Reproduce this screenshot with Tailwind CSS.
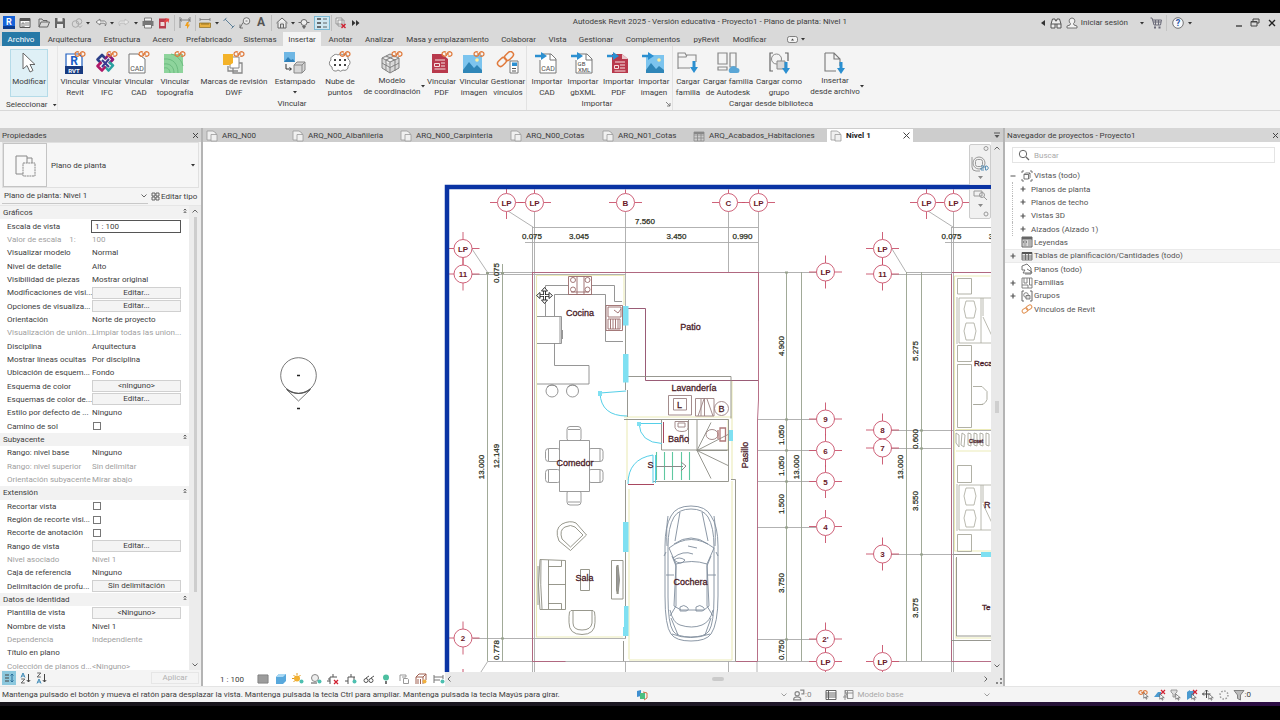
<!DOCTYPE html>
<html lang="es">
<head>
<meta charset="utf-8">
<title>Autodesk Revit 2025 - Proyecto1</title>
<script src="https://cdn.jsdelivr.net/npm/@tailwindcss/browser@4"></script>
</head>
<body class="bg-black">
<!-- Shared symbols -->
<svg class="absolute size-0" aria-hidden="true">
  <defs>
    <symbol id="link" viewBox="0 0 12 6"><g fill="none" stroke="#e07a3c" stroke-width="1.3"><path d="M5 1.2C4 .6 1 .3 1 3s3 2.400 4 1.800C6 4.200 6 1.800 7 1.200 8 .6 11 .3 11 3S8 5.400 7 4.800"/><path d="M4 3h4"/></g></symbol>
    <symbol id="down" viewBox="0 0 6 4"><path d="M1 1h4L3 3.500z" fill="#333"/></symbol>
    <symbol id="chev" viewBox="0 0 8 6"><path d="M1.500 1.500 4 4l2.500-2.500" fill="none" stroke="#666" stroke-width="1"/></symbol>
    <symbol id="plan" viewBox="0 0 12 12"><g fill="#f0f0f0" stroke="#9a9a9a" stroke-width=".8"><path d="M1 1h6l3 2v7H1z"/><path d="M5 4.500h6v6.500H5z"/></g></symbol>
    <symbol id="sheet" viewBox="0 0 12 12"><path d="M1 2h10v9H1zM1 5h10M1 8h10M4.500 2v9M8 2v9" fill="none" stroke="#888" stroke-width=".8"/><path d="M1 2h10v2H1z" fill="#888"/></symbol>
    <symbol id="cur" viewBox="0 0 8 10"><path d="M1 1v7l2-1.700L4.400 9.300l1-.5L4.200 6H7z" fill="#fff" stroke="#444" stroke-width=".8"/></symbol>
    <symbol id="impArrow" viewBox="0 0 12 8"><path d="M0 2.800h6V0l6 4-6 4V5.200H0z" fill="#2b8fd0"/></symbol>
    <symbol id="dnArrow" viewBox="0 0 8 12"><path d="M2.500 0h3v6H8l-4 6-4-6h2.500z" fill="#2b8fd0"/></symbol>
    <symbol id="plus" viewBox="0 0 8 8"><path d="M4 1.500v5M1.500 4h5" stroke="#555" stroke-width="1.200"/></symbol>
    <symbol id="fold" viewBox="0 0 4 6"><path d="M.8 2.500 2 1l1.200 1.500M.8 5 2 3.500 3.200 5" fill="none" stroke="#444" stroke-width=".9"/></symbol>
  </defs>
</svg>

<div class="flex h-screen min-h-[640px] w-full flex-col overflow-hidden bg-black font-['Roboto','Open_Sans',sans-serif] text-[8px] leading-[11px] text-[#3c3c3c]">
  <div class="h-[13px] shrink-0 bg-black"></div>

  <!-- Title bar -->
  <header class="flex h-[19px] shrink-0 items-center bg-[#d9d9d9] pl-px">
    <button aria-label="Revit" class="flex h-4 w-4 items-center justify-center"><svg class="h-[15px] w-[14px]" viewBox="0 0 14 15"><path d="M1 1h12v12H1z" fill="#1762d8"/><path d="M1 11h12v3H1z" fill="#0b3a8c"/><text x="7" y="9.500" text-anchor="middle" font-size="9" font-weight="700" fill="#fff">R</text></svg></button>
    <button aria-label="Inicio" class="flex h-4 w-4 items-center justify-center"><svg class="size-3" viewBox="0 0 12 12"><path d="M1 1.500h10v9H1z" fill="#fafafa" stroke="#555"/><path d="M1 1.500h10V4H1z" fill="#555"/><path d="M3 6h2v4H3zM6 6h4M6 8h4" stroke="#666" stroke-width=".8" fill="none"/></svg></button>
    <button aria-label="Abrir" class="ml-[3px] flex h-4 w-4 items-center justify-center"><svg class="size-3" viewBox="0 0 12 12"><path d="M1 10V2h3l1 1.500h4V5M1 10l2-5h8.500l-2 5z" fill="none" stroke="#666"/></svg></button>
    <button aria-label="Guardar" class="flex h-4 w-4 items-center justify-center"><svg class="size-3" viewBox="0 0 12 12"><path d="M1 1h9l1 1v9H1z" fill="#666"/><path d="M3.500 1h5v3.500h-5zM3 7h6v4H3z" fill="#e8e8e8"/></svg></button>
    <button aria-label="Sincronizar" class="flex h-4 w-[17px] items-center justify-center"><svg class="size-3" viewBox="0 0 12 12"><g fill="none" stroke="#aaa"><circle cx="4.500" cy="7" r="3.300"/><circle cx="8" cy="4.500" r="2.800"/><path d="M7 8.500l2 2 2-2"/></g></svg></button>
    <svg class="h-1 w-[6px]"><use href="#down"/></svg>
    <button aria-label="Deshacer" class="ml-px flex h-4 w-[17px] items-center justify-center"><svg class="size-3" viewBox="0 0 12 12"><path d="M5 2 1 5l4 3V6.200h4c1.200 0 1.500 1 1.200 2.800 1.300-1.600 1.300-5-1.200-5H5z" fill="#f4f4f4" stroke="#777" stroke-width=".9"/></svg></button>
    <svg class="h-1 w-[6px]"><use href="#down"/></svg>
    <button aria-label="Rehacer" class="ml-px flex h-4 w-4 items-center justify-center"><svg class="size-3" viewBox="0 0 12 12"><path d="M7 2l4 3-4 3V6.200H3C1.800 6.200 1.500 7.200 1.800 9 .5 7.400.5 4 3 4h4z" fill="#e8e8e8" stroke="#bbb" stroke-width=".9"/></svg></button>
    <svg class="ml-px h-1 w-[6px]"><use href="#down"/></svg>
    <button aria-label="Imprimir" class="ml-px flex h-4 w-4 items-center justify-center"><svg class="size-3" viewBox="0 0 12 12"><path d="M.5 4h11v5h-11z" fill="#777"/><path d="M2.500 1h7v3h-7zM2.500 7.500h7V11h-7z" fill="#f2f2f2" stroke="#666" stroke-width=".8"/></svg></button>
    <button aria-label="Exportar PDF" class="flex h-4 w-4 items-center justify-center"><svg class="size-3" viewBox="0 0 12 12"><path d="M1 1.500h7v10H1z" fill="#b83a4a"/><path d="M2.500 5h4v4h-4z" fill="#f0dada"/><path d="M6 3h3V1l3 3-3 3V5H6z" fill="#e64646" transform="rotate(-35 8 4)"/></svg></button>
    <span class="mx-[2px] h-4 w-px bg-[#bdbdbd]"></span>
    <button aria-label="Cota" class="flex h-4 w-4 items-center justify-center"><svg class="size-[14px]" viewBox="0 0 14 14"><path d="M2 1v11M12 1v5M2 4h10M4 2.500 2.200 4 4 5.500M10 2.500 11.800 4 10 5.500" fill="none" stroke="#777" stroke-width=".9"/><path d="M9 6l-2 4h2v3l3-4.500h-2L11 6z" fill="#f0a020"/></svg></button>
    <span class="ml-[2px] mr-px h-4 w-px bg-[#bdbdbd]"></span>
    <button aria-label="Medir" class="flex h-4 w-4 items-center justify-center"><svg class="size-3" viewBox="0 0 12 12"><path d="M1 2.500h10M1 1v3M11 1v3" stroke="#777" stroke-width=".8"/><path d="M.5 6h11v4.500H.5z" fill="#e8b040" stroke="#8a6a20" stroke-width=".7"/><path d="M3 6v2M5 6v2M7 6v2M9 6v2" stroke="#6a5010" stroke-width=".6"/></svg></button>
    <svg class="ml-px h-1 w-[6px]"><use href="#down"/></svg>
    <button aria-label="Cota alineada" class="ml-px flex h-4 w-4 items-center justify-center"><svg class="size-3" viewBox="0 0 12 12"><path d="M2 2l8 8M.5 4 3.500.8M8.500 11.500l3-3" stroke="#5c7f98" fill="none"/></svg></button>
    <button aria-label="Etiqueta" class="flex h-4 w-4 items-center justify-center"><svg class="size-3" viewBox="0 0 12 12"><circle cx="7.500" cy="4" r="3.300" fill="#eee" stroke="#666" stroke-width=".9"/><path d="M6.500 4h2M4 5.500 1 11M1 7.500v3.500h3" stroke="#666" fill="none" stroke-width=".9"/></svg></button>
    <button aria-label="Texto" class="flex h-4 w-4 items-center justify-center text-[12px] font-bold text-[#555]">A</button>
    <span class="ml-[2px] mr-[2px] h-4 w-px bg-[#bdbdbd]"></span>
    <button aria-label="Vista 3D" class="flex h-4 w-4 items-center justify-center"><svg class="size-3" viewBox="0 0 12 12"><path d="M.5 6 6 1l5.500 5M2 5.500V11h8V5.500M4.500 11V7h3v4" fill="#eee" stroke="#666"/></svg></button>
    <svg class="h-1 w-[6px]"><use href="#down"/></svg>
    <button aria-label="Sección" class="flex h-4 w-4 items-center justify-center"><svg class="size-3" viewBox="0 0 12 12"><circle cx="6" cy="5.500" r="3" fill="#eee" stroke="#666"/><path d="M.5 5.500h2.500M9 5.500h2.500M4.500 9.500l1.500 2 1.500-2z" stroke="#666" fill="#666"/></svg></button>
    <button aria-label="Líneas finas" class="ml-[2px] flex h-[14px] w-4 items-center justify-center border border-[#7cb9d4] bg-[#cfe6f0]"><svg class="size-3" viewBox="0 0 12 12"><path d="M1 2h4M1 6h4M1 10h4" stroke="#444" stroke-width="1.500"/><path d="M7 2h4M7 6h4M7 10h4" stroke="#444" stroke-width=".8"/></svg></button>
    <span class="mx-px h-4 w-px bg-[#bdbdbd]"></span>
    <button aria-label="Cerrar inactivas" class="flex h-4 w-4 items-center justify-center"><svg class="size-3" viewBox="0 0 12 12"><path d="M1 1h6v6H1zM3 3h6v6H3z" fill="#eee" stroke="#888" stroke-width=".8"/><path d="M6.500 7l4 4M10.500 7l-4 4" stroke="#d02030" stroke-width="1.400"/></svg></button>
    <button aria-label="Más" class="flex h-4 w-[14px] items-center justify-center"><svg class="h-[6px] w-2" viewBox="0 0 8 6"><path d="M0 0l3.500 3L0 6zM4 0l3.500 3L4 6z" fill="#333"/></svg></button>
    <h1 class="flex-1 pb-[3px] pl-4 text-center whitespace-nowrap">Autodesk Revit 2025 - Versión educativa - Proyecto1 - Plano de planta: Nivel 1</h1>
    <div class="flex items-center">
      <svg class="mr-[5px] h-[6px] w-1" viewBox="0 0 4 6"><path d="M4 0v6L0 3z" fill="#333"/></svg>
      <button aria-label="Buscar ayuda" class="w-4"><svg class="size-3" viewBox="0 0 12 12"><path d="M2.500 2h2.500l.5 2h1L7 2h2.500L11 7v4H7V7H5v4H1V7zM1 7h4M7 7h4" fill="#eee" stroke="#555"/></svg></button>
      <button class="flex items-center gap-[3px]"><svg class="size-3" viewBox="0 0 12 12"><path d="M6 1a3 3 0 0 1 1.500 5.500L8 8l3 1v2H1V9l3-1 .5-1.500A3 3 0 0 1 6 1z" fill="#f2f2f2" stroke="#666" stroke-width=".9"/></svg>Iniciar sesión</button>
      <svg class="ml-[11px] h-1 w-[6px]"><use href="#down"/></svg>
      <button aria-label="Tienda" class="ml-[5px] w-4"><svg class="size-3" viewBox="0 0 12 12"><path d="M.5 1H2l2 7h6.500L11.500 3H2.600M3 5h8M5.500 3v5M8.500 3v5" fill="none" stroke="#6a6a78"/><path d="M4 9.500h2v2H4zM8.500 9.500h2v2h-2z" fill="#6a6a78"/></svg></button>
      <span class="h-4 w-px bg-[#c4c4c4]"></span>
      <button aria-label="Ayuda" class="ml-[5px] size-3"><svg class="size-3" viewBox="0 0 12 12"><circle cx="6" cy="6" r="5.300" fill="#f6f8fc" stroke="#555" stroke-width=".8"/><text x="6" y="9.200" text-anchor="middle" font-size="9" font-weight="700" fill="#2856a8">?</text></svg></button>
      <svg class="ml-[3px] h-1 w-[6px]"><use href="#down"/></svg>
      <button aria-label="Minimizar" class="ml-[40px] w-4"><svg class="size-3" viewBox="0 0 12 12"><path d="M3 9h6" stroke="#333" stroke-width="1.300"/></svg></button>
      <button aria-label="Restaurar" class="w-[17px]"><svg class="size-3" viewBox="0 0 12 12"><path d="M4 4V2h6v4H8M2 4.500h6V9H2zM2 5h6" fill="none" stroke="#444"/></svg></button>
      <button aria-label="Cerrar" class="w-[14px]"><svg class="size-3" viewBox="0 0 12 12"><path d="M3 3l6 6M9 3 3 9" stroke="#222" stroke-width="1.300"/></svg></button>
    </div>
  </header>

  <!-- Ribbon tabs -->
  <nav class="flex h-[14px] shrink-0 items-stretch bg-[#d9d9d9] pl-[2px] whitespace-nowrap">
    <button class="w-[38px] bg-[#2779a7] text-white">Archivo</button>
    <button class="ml-px w-[57px]">Arquitectura</button>
    <button class="w-[48px]">Estructura</button>
    <button class="w-[34px]">Acero</button>
    <button class="w-[58px]">Prefabricado</button>
    <button class="w-[44px]">Sistemas</button>
    <button class="mx-px w-[38px] bg-[#f4f4f4]">Insertar</button>
    <button class="w-[37px]">Anotar</button>
    <button class="w-[41px]">Analizar</button>
    <button class="w-[95px]">Masa y emplazamiento</button>
    <button class="w-[47px]">Colaborar</button>
    <button class="w-[31px]">Vista</button>
    <button class="w-[46px]">Gestionar</button>
    <button class="w-[68px]">Complementos</button>
    <button class="w-[39px]">pyRevit</button>
    <button class="w-[47px]">Modificar</button>
    <button aria-label="Minimizar cinta" class="ml-[14px] flex items-center gap-[2px]"><svg class="h-[7px] w-[11px]" viewBox="0 0 11 7"><rect x=".5" y=".5" width="10" height="6" rx="2" fill="#f2f2f2" stroke="#666" stroke-width=".8"/><path d="M4 4.500 5.500 2.500 7 4.500z" fill="#444"/></svg><svg class="h-1 w-[6px]"><use href="#down"/></svg></button>
  </nav>

  <!-- Ribbon -->
  <section class="flex h-[65px] shrink-0 border-b border-[#d8d8d8] bg-[#f4f4f4] whitespace-nowrap">
    <div class="flex w-[58px] flex-col border-r border-[#e6e6e6] pt-[3px]">
      <button class="ml-[10px] flex h-[48px] w-[38px] flex-col items-center border border-[#b5dbe8] bg-[#dff0f6] pt-px">
        <svg class="size-6 shrink-0" viewBox="0 0 24 24"><path d="M6 2v16l4-3.500 3 6.500 3-1.500-3-6h5z" fill="#fff" stroke="#666"/></svg><span class="mt-px">Modificar</span></button>
      <button class="mt-[2px] flex items-center gap-[4px] pl-[6px]">Seleccionar<svg class="h-1 w-[6px]"><use href="#down"/></svg></button>
    </div>
    <div class="flex w-[469px] flex-col border-r border-[#e2e2e2] pt-[5px]">
      <div class="flex h-[47px] items-start pl-px">
        <button class="flex w-8 flex-col items-center"><svg class="size-6" viewBox="0 0 24 24"><path d="M3 3h13l3 3v12H3z" fill="#fff" stroke="#1f5fc0" stroke-width="1.200"/><path d="M2 15h18v8H2z" fill="#173a80"/><text x="11" y="14" text-anchor="middle" font-size="12" font-weight="700" fill="#1c5fc8">R</text><text x="11" y="21.500" text-anchor="middle" font-size="6" font-weight="700" fill="#fff">RVT</text><use href="#link" x="11" y="0" width="12" height="6"/></svg><span class="mt-px">Vincular<br>Revit</span></button>
        <button class="flex w-8 flex-col items-center"><svg class="size-6" viewBox="0 0 24 24"><g fill="none" stroke-width="2.600" stroke-linejoin="round"><path d="M6 12 2.500 8.500 7 4l4 4" stroke="#2c3f88"/><path d="M10 8l3.500-4L18 8.500l-4 4" stroke="#8c1a78"/><path d="M14 11l4 3.500-4.500 5-3.500-4" stroke="#2aa0a0"/><path d="M10.500 15.500 7 19.500 2.500 15l4-4" stroke="#b01868"/><path d="M7 9l7 7M14 8l-7 8" stroke="#3a3a90" stroke-width="2"/></g><use href="#link" x="11" y="0" width="12" height="6"/></svg><span class="mt-px">Vincular<br>IFC</span></button>
        <button class="flex w-8 flex-col items-center"><svg class="size-6" viewBox="0 0 24 24"><path d="M2 3h9l7 5v14H2z" fill="#fff" stroke="#777"/><text x="10" y="20" text-anchor="middle" font-size="7" fill="#555">CAD</text><use href="#link" x="11" y="0" width="12" height="6"/></svg><span class="mt-px">Vincular<br>CAD</span></button>
        <button class="flex w-10 flex-col items-center"><svg class="size-6" viewBox="0 0 24 24"><path d="M1 3h19v19H1z" fill="#8ed49c"/><g fill="none" stroke="#6cbc80"><path d="M1 17c4-1 6 2 6 5M1 13c6-1 10 3 10 9M1 8c9-1 14 5 14 14M8 3c6 1 11 7 12 12"/></g><use href="#link" x="11" y="0" width="12" height="6"/></svg><span class="mt-px">Vincular<br>topografía</span></button>
        <button class="flex w-[78px] flex-col items-center"><svg class="size-6" viewBox="0 0 24 24"><path d="M11 12h9v10h-9z M6 15v5h10" fill="none" stroke="#888" stroke-width="1.300"/><path d="M8 6h9v11H8z" fill="#fff" stroke="#888"/><path d="M1 3h10v9l-3 2H1z" fill="#f3b229"/><use href="#link" x="11" y="0" width="12" height="6"/></svg><span class="mt-px">Marcas de revisión<br>DWF</span></button>
        <button class="flex w-11 flex-col items-center"><svg class="size-6" viewBox="0 0 24 24"><path d="M1 1h11v10H1z" fill="#6fb7e4"/><path d="M1 11 5 6l3 3 2-1 2 3z" fill="#2f7fb8"/><path d="M3 13v5h5M6.500 16.500 8.500 18l-2 1.500" fill="none" stroke="#333"/><path d="M11 14l3-3h8v8l-3 3h-8zM11 14h8v8M19 14l3-3" fill="#d6d6d6" stroke="#888"/></svg><span class="mt-px">Estampado</span><svg class="mt-[3px] h-1 w-[6px]"><use href="#down"/></svg></button>
        <button class="flex w-[46px] flex-col items-center"><svg class="size-6" viewBox="0 0 24 24"><path d="M5 5a3.500 3.500 0 0 1 5-1 3.500 3.500 0 0 1 5 0 3.500 3.500 0 0 1 5 4 4 4 0 0 1 0 7 3.500 3.500 0 0 1-5 4 3.500 3.500 0 0 1-5 0 3.500 3.500 0 0 1-6-3 4 4 0 0 1-1-7 3 3 0 0 1 2-4z" fill="#fff" stroke="#888"/><path d="M6 8h2v2H6zM11 8h2v2h-2zM16 8h2v2h-2zM6 13h2v2H6zM11 13h2v2h-2zM16 13h2v2h-2z" fill="#444"/><use href="#link" x="11" y="0" width="12" height="6"/></svg><span class="mt-px">Nube de<br>puntos</span></button>
        <button class="flex w-[58px] flex-col items-center"><svg class="size-6" viewBox="0 0 24 24"><path d="M2 7l8-4 9 4v10l-9 5-8-5zM2 7l8 4 9-4M10 11v11M2 12l8 4.500 9-4.500M6 5l9 4v11M14.500 4.800 6 9v10.500" fill="#d8d8d8" stroke="#808080"/><use href="#link" x="11" y="0" width="12" height="6"/></svg><span>Modelo<br>de coordinación</span></button>
        <svg class="mt-[33px] h-1 w-1" viewBox="1 0 4 4"><path d="M1 1h4L3 3.500z" fill="#333"/></svg>
        <button class="flex w-[33px] flex-col items-center"><svg class="size-6" viewBox="0 0 24 24"><path d="M2 3h10l6 5v14H2z" fill="#b8394c"/><path d="M5 9h10M4.500 12.500h5v3h-5zM11 12h4M11 15h4M4.500 18h11" stroke="#f6e0e0" fill="none"/><use href="#link" x="11" y="0" width="12" height="6"/></svg><span class="mt-px">Vincular<br>PDF</span></button>
        <button class="flex w-8 flex-col items-center"><svg class="size-6" viewBox="0 0 24 24"><path d="M1 4h19v18H1z" fill="#7cc4ee"/><path d="M1 19l6-8 5 6 3-3 5 5v3H1z" fill="#2f86b8"/><circle cx="15" cy="9" r="1.800" fill="#fff0a0"/><use href="#link" x="11" y="0" width="12" height="6"/></svg><span class="mt-px">Vincular<br>imagen</span></button>
        <button class="flex w-9 flex-col items-center"><svg class="size-6" viewBox="0 0 24 24"><g fill="none" stroke="#e07a3c" stroke-width="1.500"><rect x="-5" y="-3" width="10" height="6" rx="3" transform="translate(6 11) rotate(-45)"/><rect x="-5" y="-3" width="10" height="6" rx="3" transform="translate(13 5) rotate(-45)"/></g><path d="M14 10h8v12h-8z" fill="#fff" stroke="#777"/><path d="M16 11.500h5V15h-5z" fill="#2b8fd0"/><path d="M16 17.500h4M16 20h4" stroke="#555"/></svg><span class="mt-px">Gestionar<br>vínculos</span></button>
      </div>
      <p class="text-center">Vincular</p>
    </div>
    <div class="flex w-[146px] flex-col border-r border-[#e2e2e2] pt-[5px]">
      <div class="flex h-[47px] items-start pl-[2px]">
        <button class="flex w-9 flex-col items-center"><svg class="size-6" viewBox="0 0 24 24"><path d="M7 3h9l5 5v14H5V9" fill="#fff" stroke="#777"/><path d="M15 3v6h6" fill="none" stroke="#777"/><text x="13" y="20" text-anchor="middle" font-size="7" fill="#555">CAD</text><use href="#impArrow" x="0" y="1" width="12" height="8"/></svg><span class="mt-px">Importar<br>CAD</span></button>
        <button class="flex w-9 flex-col items-center"><svg class="size-6" viewBox="0 0 24 24"><path d="M7 3h9l5 5v14H5V9" fill="#fff" stroke="#777"/><path d="M15 3v6h6" fill="none" stroke="#777"/><text x="10.500" y="14.500" text-anchor="middle" font-size="6" fill="#444">GB</text><text x="13" y="20.500" text-anchor="middle" font-size="6" fill="#444">XML</text><use href="#impArrow" x="0" y="1" width="12" height="8"/></svg><span class="mt-px">Importar<br>gbXML</span></button>
        <button class="flex w-[35px] flex-col items-center"><svg class="size-6" viewBox="0 0 24 24"><path d="M5 3h10l6 5v14H5z" fill="#b8394c"/><path d="M15 3v5h6" fill="#e8c8cc"/><path d="M8 11h10M7.500 14.500h4v3h-4zM13 14h5M13 17h5M7.500 20h11" stroke="#f6e0e0" fill="none"/><use href="#impArrow" x="0" y="1" width="12" height="8"/></svg><span class="mt-px">Importar<br>PDF</span></button>
        <button class="flex w-9 flex-col items-center"><svg class="size-6" viewBox="0 0 24 24"><path d="M4 4h18v18H4z" fill="#7cc4ee"/><path d="M4 19l5-7 5 6 3-3 5 4v3H4z" fill="#2f86b8"/><circle cx="17" cy="9" r="1.800" fill="#fff0a0"/><use href="#impArrow" x="0" y="1" width="12" height="8"/></svg><span class="mt-px">Importar<br>imagen</span></button>
      </div>
      <div class="flex items-center justify-center pl-[2px]"><p class="flex-1 text-center">Importar</p><button aria-label="Opciones de importación" class="mr-px size-[6px]"><svg class="size-[6px]" viewBox="0 0 6 6"><path d="M1 1l4 4M5 2v3H2" stroke="#666" fill="none" stroke-width=".8"/></svg></button></div>
    </div>
    <div class="flex w-[196px] flex-col pt-[5px]">
      <div class="flex h-[47px] items-start">
        <button class="flex w-[30px] flex-col items-center"><svg class="size-6" viewBox="0 0 24 24"><path d="M2 18V2h7l1 2h10v7M2 6h8l1-2M2 17h12" fill="none" stroke="#888" stroke-width="1.100"/><use href="#dnArrow" x="14" y="10" width="8" height="12"/></svg><span class="mt-px">Cargar<br>familia</span></button>
        <button class="flex w-[50px] flex-col items-center"><svg class="size-6" viewBox="0 0 24 24"><path d="M2 2h9v11H2zM2 16h9v3H2zM14 2h6v14h-6z" fill="none" stroke="#888" stroke-width="1.200"/><path d="M14 22a3 3 0 0 1 0-5 4 4 0 0 1 7 0 2.500 2.500 0 0 1 0 5z" fill="#5aa6d6"/></svg><span class="mt-px">Cargar familia<br>de Autodesk</span></button>
        <button class="flex w-[52px] flex-col items-center"><svg class="size-6" viewBox="0 0 24 24"><path d="M6 2H3v18h3M18 2h3v8" fill="none" stroke="#666" stroke-width="1.200"/><circle cx="9.500" cy="8" r="5" fill="none" stroke="#888"/><path d="M10 10h8v8h-8z" fill="#d8d8d8" stroke="#888"/><use href="#dnArrow" x="15" y="11" width="8" height="12"/></svg><span class="mt-px">Cargar como<br>grupo</span></button>
        <button class="flex w-[60px] flex-col items-center"><svg class="size-6" viewBox="0 0 24 24"><path d="M2 2h9l6 6v7M2 2v18h11M11 2v6h6" fill="none" stroke="#777" stroke-width="1.100"/><use href="#dnArrow" x="14" y="11" width="8" height="12"/></svg><span>Insertar<br>desde archivo</span></button>
        <svg class="-ml-[5px] mt-[33px] h-1 w-1" viewBox="1 0 4 4"><path d="M1 1h4L3 3.500z" fill="#333"/></svg>
      </div>
      <p class="text-center">Cargar desde biblioteca</p>
    </div>
  </section>
  <div class="h-[17px] shrink-0 bg-[#f4f4f4]"></div>

  <!-- Workspace -->
  <main class="flex min-h-0 flex-1 bg-white">
    <!-- Properties palette -->
    <aside class="flex w-[203px] shrink-0 flex-col border-r-2 border-[#b4b4b4] bg-[#f4f4f4]">
      <div class="flex h-[14px] shrink-0 items-center justify-between bg-[#d0d0d0] pl-[2px] pr-px"><h2>Propiedades</h2><button aria-label="Cerrar propiedades" class="size-[9px]"><svg class="size-[9px]" viewBox="0 0 9 9"><path d="M2 2l5 5M7 2 2 7" stroke="#444"/></svg></button></div>
      <div class="mx-[2px] flex h-[46px] shrink-0 items-center border border-[#e0e0e0] bg-[#f6f6f6]">
        <span class="flex h-[44px] w-[44px] items-center justify-center border border-[#c4c4c4] bg-[#f8f8f8]"><svg class="size-6" viewBox="0 0 24 24"><path d="M3 3h11v2h5v5M3 3v18h7" fill="none" stroke="#888"/><path d="M10 10h12v13H10z" fill="#f8f8f8" stroke="#888" stroke-dasharray="2 .6"/><path d="M14 5v5" stroke="#888"/></svg></span>
        <select aria-label="Tipo" class="ml-[4px] h-4 flex-1 appearance-none bg-transparent"><option>Plano de planta</option></select>
        <svg class="mr-[2px] h-1 w-[6px]"><use href="#down"/></svg>
      </div>
      <div class="flex h-4 shrink-0 items-center pl-[2px]">
        <div class="flex h-full w-[146px] items-center border-b border-[#c8c8c8]"><select aria-label="Vista" class="h-[14px] flex-1 appearance-none bg-transparent pl-[2px]"><option>Plano de planta: Nivel 1</option></select><svg class="h-[6px] w-2"><use href="#chev"/></svg></div>
        <button class="ml-[3px] flex items-center gap-px whitespace-nowrap"><svg class="size-[9px]" viewBox="0 0 9 9"><path d="M1 1h3v3H1zM1 5h3v3H1zM5 5h3v3H5zM5 1h3v3H5z" fill="none" stroke="#555" stroke-width=".9"/></svg>Editar tipo</button>
      </div>
      <div class="mt-px flex min-h-0 flex-1 border-t border-[#e6e6e6]">
        <div class="flex-1 overflow-hidden bg-white">
          <div class="grid h-[467px] auto-rows-fr whitespace-nowrap">
            <div class="flex items-center justify-between bg-[#f2f2f2] pl-[3px] pr-[2px]"><h3>Gráficos</h3><svg class="mb-1 h-[6px] w-1"><use href="#fold"/></svg></div>
            <div class="flex items-center pl-[7px]"><label for="escala" class="w-[84px]">Escala de vista</label><input id="escala" value="1 : 100" class="h-[13px] w-[90px] border border-[#555] bg-white pl-[3px]"></div>
            <div class="flex items-center pl-[7px] text-[#a0a0a0]"><span class="w-[85px] whitespace-pre">Valor de escala    1:</span><span>100</span></div>
            <div class="flex items-center pl-[7px]"><span class="w-[85px]">Visualizar modelo</span><span>Normal</span></div>
            <div class="flex items-center pl-[7px]"><span class="w-[85px]">Nivel de detalle</span><span>Alto</span></div>
            <div class="flex items-center pl-[7px]"><span class="w-[85px]">Visibilidad de piezas</span><span>Mostrar original</span></div>
            <div class="flex items-center pl-[7px]"><span class="w-[85px]">Modificaciones de visi...</span><button class="h-3 w-[89px] border border-[#d0d0d0] bg-[#f4f4f4] leading-[10px]">Editar...</button></div>
            <div class="flex items-center pl-[7px]"><span class="w-[85px]">Opciones de visualiza...</span><button class="h-3 w-[89px] border border-[#d0d0d0] bg-[#f4f4f4] leading-[10px]">Editar...</button></div>
            <div class="flex items-center pl-[7px]"><span class="w-[85px]">Orientación</span><span>Norte de proyecto</span></div>
            <div class="flex items-center pl-[7px] text-[#a0a0a0]"><span class="w-[85px]">Visualización de unión...</span><span>Limpiar todas las union...</span></div>
            <div class="flex items-center pl-[7px]"><span class="w-[85px]">Disciplina</span><span>Arquitectura</span></div>
            <div class="flex items-center pl-[7px]"><span class="w-[85px]">Mostrar líneas ocultas</span><span>Por disciplina</span></div>
            <div class="flex items-center pl-[7px]"><span class="w-[85px]">Ubicación de esquem...</span><span>Fondo</span></div>
            <div class="flex items-center pl-[7px]"><span class="w-[85px]">Esquema de color</span><button class="h-3 w-[89px] border border-[#d0d0d0] bg-[#f4f4f4] leading-[10px]">&lt;ninguno&gt;</button></div>
            <div class="flex items-center pl-[7px]"><span class="w-[85px]">Esquemas de color de...</span><button class="h-3 w-[89px] border border-[#d0d0d0] bg-[#f4f4f4] leading-[10px]">Editar...</button></div>
            <div class="flex items-center pl-[7px]"><span class="w-[85px]">Estilo por defecto de ...</span><span>Ninguno</span></div>
            <div class="flex items-center pl-[7px]"><label for="sol" class="w-[86px]">Camino de sol</label><input id="sol" type="checkbox" class="size-2 appearance-none border border-[#777] bg-white"></div>
            <div class="flex items-center justify-between bg-[#f2f2f2] pl-[3px] pr-[2px]"><h3>Subyacente</h3><svg class="mb-1 h-[6px] w-1"><use href="#fold"/></svg></div>
            <div class="flex items-center pl-[7px]"><span class="w-[85px]">Rango: nivel base</span><span>Ninguno</span></div>
            <div class="flex items-center pl-[7px] text-[#a0a0a0]"><span class="w-[85px]">Rango: nivel superior</span><span>Sin delimitar</span></div>
            <div class="flex items-center pl-[7px] text-[#a0a0a0]"><span class="w-[85px]">Orientación subyacente</span><span>Mirar abajo</span></div>
            <div class="flex items-center justify-between bg-[#f2f2f2] pl-[3px] pr-[2px]"><h3>Extensión</h3><svg class="mb-1 h-[6px] w-1"><use href="#fold"/></svg></div>
            <div class="flex items-center pl-[7px]"><label for="rv" class="w-[86px]">Recortar vista</label><input id="rv" type="checkbox" class="size-2 appearance-none border border-[#777] bg-white"></div>
            <div class="flex items-center pl-[7px]"><label for="rr" class="w-[86px]">Región de recorte visi...</label><input id="rr" type="checkbox" class="size-2 appearance-none border border-[#777] bg-white"></div>
            <div class="flex items-center pl-[7px]"><label for="ra" class="w-[86px]">Recorte de anotación</label><input id="ra" type="checkbox" class="size-2 appearance-none border border-[#777] bg-white"></div>
            <div class="flex items-center pl-[7px]"><span class="w-[85px]">Rango de vista</span><button class="h-3 w-[89px] border border-[#d0d0d0] bg-[#f4f4f4] leading-[10px]">Editar...</button></div>
            <div class="flex items-center pl-[7px] text-[#a0a0a0]"><span class="w-[85px]">Nivel asociado</span><span>Nivel 1</span></div>
            <div class="flex items-center pl-[7px]"><span class="w-[85px]">Caja de referencia</span><span>Ninguno</span></div>
            <div class="flex items-center pl-[7px]"><span class="w-[85px]">Delimitación de profu...</span><button class="h-3 w-[89px] border border-[#d0d0d0] bg-[#f4f4f4] leading-[10px]">Sin delimitación</button></div>
            <div class="flex items-center justify-between bg-[#f2f2f2] pl-[3px] pr-[2px]"><h3>Datos de identidad</h3><svg class="mb-1 h-[6px] w-1"><use href="#fold"/></svg></div>
            <div class="flex items-center pl-[7px]"><span class="w-[85px]">Plantilla de vista</span><button class="h-3 w-[89px] border border-[#d0d0d0] bg-[#f4f4f4] leading-[10px]">&lt;Ninguno&gt;</button></div>
            <div class="flex items-center pl-[7px]"><span class="w-[85px]">Nombre de vista</span><span>Nivel 1</span></div>
            <div class="flex items-center pl-[7px] text-[#a0a0a0]"><span class="w-[85px]">Dependencia</span><span>Independiente</span></div>
            <div class="flex items-center pl-[7px]"><span class="w-[85px]">Título en plano</span></div>
            <div class="flex items-center pl-[7px] text-[#a0a0a0]"><span class="w-[85px]">Colección de planos d...</span><span>&lt;Ninguno&gt;</span></div>
          </div>
        </div>
        <div class="flex w-3 flex-col items-center bg-[#ececec] py-[2px]"><svg class="h-[6px] w-2 rotate-180"><use href="#chev"/></svg><span class="mt-[3px] h-[375px] w-[3px] bg-[#cdcdcd]"></span><svg class="mt-auto h-[6px] w-2"><use href="#chev"/></svg></div>
      </div>
      <div class="flex h-4 shrink-0 items-center gap-[2px] px-[2px]">
        <button aria-label="Agrupar" class="flex h-[14px] w-[14px] items-center justify-center bg-[#8cc8de]"><svg class="size-[10px]" viewBox="0 0 10 10"><path d="M1 2h4M1 5h4M1 8h4" stroke="#444" stroke-width="1.200"/><path d="M8 1v8M6.500 2.500 8 1l1.500 1.500M6.500 7.500 8 9l1.500-1.500" stroke="#2a6f9a" fill="none"/></svg></button>
        <button aria-label="Orden ascendente" class="h-3 w-[14px]"><svg class="h-3 w-[14px]" viewBox="0 0 14 12"><path d="M3 5.500 5 1l2 4.500M3.700 4h2.600" fill="none" stroke="#2b7fb0" stroke-width=".9"/><path d="M3.200 7h3.600l-3.600 4h3.600" fill="none" stroke="#555" stroke-width=".9"/><path d="M10.500 2v8M8.800 8l1.700 2 1.700-2" stroke="#444" fill="none"/></svg></button>
        <button aria-label="Orden descendente" class="h-3 w-[14px]"><svg class="h-3 w-[14px]" viewBox="0 0 14 12"><path d="M3.200 1h3.600L3.200 5h3.600" fill="none" stroke="#555" stroke-width=".9"/><path d="M3 11.500 5 7l2 4.500M3.700 10h2.600" fill="none" stroke="#2b7fb0" stroke-width=".9"/><path d="M10.500 2v8M8.800 8l1.700 2 1.700-2" stroke="#444" fill="none"/></svg></button>
        <button disabled class="ml-auto h-3 w-[48px] border border-[#e6e6e6] leading-[10px] text-[#b0b0b0]">Aplicar</button>
      </div>
    </aside>

    <!-- Drawing view -->
    <section class="flex min-w-0 flex-1 flex-col">
      <div class="flex h-[14px] shrink-0 items-stretch bg-[#cdcdcd] pt-px whitespace-nowrap">
        <button class="flex w-[86px] items-center gap-1 pl-[3px]"><svg class="size-3 shrink-0"><use href="#plan"/></svg>ARQ_N00</button>
        <button class="flex w-[108px] items-center gap-1 pl-[3px]"><svg class="size-3 shrink-0"><use href="#plan"/></svg>ARQ_N00_Albañileria</button>
        <button class="flex w-[110px] items-center gap-1 pl-[3px]"><svg class="size-3 shrink-0"><use href="#plan"/></svg>ARQ_N00_Carpinteria</button>
        <button class="flex w-[92px] items-center gap-1 pl-[3px]"><svg class="size-3 shrink-0"><use href="#plan"/></svg>ARQ_N00_Cotas</button>
        <button class="flex w-[91px] items-center gap-1 pl-[3px]"><svg class="size-3 shrink-0"><use href="#plan"/></svg>ARQ_N01_Cotas</button>
        <button class="flex w-[134px] items-center gap-1 pl-[3px]"><svg class="size-3 shrink-0"><use href="#sheet"/></svg>ARQ_Acabados_Habitaciones</button>
        <button class="ml-[3px] flex w-[86px] items-center gap-1 bg-white pl-[3px] font-bold text-[#222]"><svg class="size-3 shrink-0"><use href="#plan"/></svg>Nivel 1<svg class="mr-[2px] ml-auto size-[9px]" viewBox="0 0 9 9"><path d="M1.500 1.500l6 6M7.500 1.500l-6 6" stroke="#444"/></svg></button>
        <button aria-label="Lista de vistas" class="mr-[2px] ml-auto"><svg class="h-[7px] w-2" viewBox="0 0 8 7"><path d="M1 1h6" stroke="#555"/><path d="M1.500 3h5L4 6z" fill="#555"/></svg></button>
      </div>
      <div class="flex min-h-0 flex-1">
        <div class="relative min-w-0 flex-1 overflow-hidden bg-white">
          <svg class="block size-full" font-family="Liberation Sans, Arial, sans-serif">
            <defs>
              <g id="bb"><circle r="9" fill="#fff" stroke="#c8506a" stroke-width=".9"/></g>
              <g id="tk" stroke="#c8506a" stroke-width=".9"><path d="M-16.500 0H-9M9 0h7.500M0-16.500V-9M0 9v7.500"/></g>
              <g id="th" stroke="#c8506a" stroke-width=".9"><path d="M-16.500 0H-9M9 0h7.500M0-13V-9"/></g>
              <g id="bed" fill="none" stroke="#a8a89c" stroke-width=".8"><path d="M0-1v47M2 0h34M2 45h34M24 0v45M26 19l8 17 4 8M26 0v18M2 0v45"/><path d="M9 3h8l2 8-2 9H9l-2-9zM9 25h8l2 8-2 9H9l-2-9z"/></g>
            </defs>
            <g transform="translate(-203 -142)">
              <!-- elevation mark -->
              <g fill="none" stroke="#555" stroke-width=".8"><circle cx="298.500" cy="375.500" r="17.800"/><path d="M287 390l11.500 11 11.500-11"/><path d="M286.500 389q12 9 24 0" stroke-width="1.200"/><path d="M297 375.500h3M297 408.500h3" stroke="#222" stroke-width="1.300"/></g>
              <!-- dimension and axis lines -->
              <g fill="none" stroke="#a9a9a9" stroke-width=".9">
                <path d="M508 211l25 16M472 249l16 24M532 227.500h226M525 242.500h233M532.500 227v445M534.500 211v461M625.500 211v104M728.500 211v61M758.500 211v110M488 272.500h328M472 274.500h154M473 638.500h153M488 661.500h328M488 661l-9 14M625.500 661v12M728.500 661v12M757 661v12"/>
                <path d="M758 419.500h58M758 450.500h58M758 481.500h58M757 527.500h59M757 639.500h59"/>
                <path d="M928 211l25 16M892 249l14 23M951 227.500h40M945 242.500h46M951.500 227v445M953.500 211v461M892 274.500h60M906 272.500h85M891 430.500h100M891 448.500h60M891 554.500h100M892 661.500h60"/>
              </g>
              <g fill="none" stroke="#96a08c" stroke-width=".9"><path d="M487.500 272v389M502.500 264v397M786.500 272v389M801.500 272v389M906.500 272v389M921.500 272v389"/><path d="M486 273h3M501 273h3M785 272.500h3M785 419.500h3M785 450.500h3M785 481.500h3M785 527.500h3M785 639.500h3M920 430.500h3M920 448.500h3M920 554.500h3M501 638.500h3" stroke-width="2"/></g>
              <!-- yellow walls -->
              <g fill="none" stroke="#ecebb8" stroke-width="1.100"><path d="M536.500 276V637H623M536 275.500h88M624 275v30M624 417h108M627 418v62M732 381v98M728 451v-32M629 489v170M629 660h103M732 481v179M954.500 276v275h37M954.500 276h36M956 429.500h35M956 451h35M956 558v80h35"/></g>
              <!-- property outline -->
              <g fill="none" stroke="#b0607a" stroke-width=".9"><path d="M532 272.500h226.500M532.500 272v389.500h33M736 661.500h21.500M757.500 661V420l1-20V272M951.500 274v387.500h40M952 272.500h39"/><path d="M627 308.500h18.500v72H758" stroke="#8f4a66"/></g>
              <!-- walls -->
              <g fill="none" stroke="#8c8c84" stroke-width=".9">
                <path d="M625.500 310v80M628 376.500h103v42M627.500 390v27M624 419.500h104.500v62H653M661.500 420v30h67M697 420v31M625.500 480v158M623.500 641v20M731 479.500h4.500v182M688.500 420v24"/>
                <path d="M697 450.500l14-28M697 450.500l31-16M697 450.500h30M697 450.500l31 15M697 450.500l14 28"/>
                <path d="M956.500 557v79h35M951 640.500h40M953.500 554.500h37"/>
              </g>
              <!-- kitchen -->
              <g fill="none" stroke="#8a8a8a" stroke-width=".9">
                <path d="M568 285.500h-22.500V316M592 285.500h22.500v16H622M554.500 316v-21.500h51v47H623M537 316.500h24.500v27H537M560 317v26M562.500 330v9M554.500 343v22.500h34.500v18.500h-52"/>
                <circle cx="552" cy="391" r="6"/><circle cx="572.500" cy="391" r="6"/><path d="M547 387q5-4 10 0M567.500 387q5-4 10 0"/>
                <g stroke="#9a6a6a"><path d="M568.500 276.500h23v18h-23zM577 276.500v18M584 276.500v18M571 292h18"/><circle cx="573" cy="280" r="2.500"/><circle cx="573" cy="289.500" r="2.500"/><circle cx="587.500" cy="280" r="2.500"/><circle cx="587.500" cy="289.500" r="2.500"/><path d="M606 305.500h16.500v25H606zM608 307h13v10h-13zM608 319h12v10h-12zM610.500 319v10M613 319v10M615.500 319v10M618 319v10M614 310l4 3 3-4"/></g>
              </g>
              <!-- laundry and bathroom -->
              <g fill="none" stroke="#9a8080" stroke-width=".9"><path d="M668.500 395.500h23v19.500h-23zM673.500 398.500h13v11.500h-13zM695.500 398.500h18.500v17.500h-18.500zM704.500 398v18M698 416l6-17M707 399l6 17M701 399v17"/><circle cx="721.500" cy="408.500" r="7"/><path d="M675 421.500h13v6q0 4-6 4t-7-4zM678 423h7v4h-7z"/><ellipse cx="712" cy="434.500" rx="6" ry="5"/><path d="M720 428h5.500v13H720zM718 430v9" stroke="#b07878" stroke-width="1.300"/></g>
              <path d="M663.500 422v21M628 484.500h26" stroke="#a84860" fill="none"/>
              <g fill="none" stroke="#5fc8a0" stroke-width="1.100"><path d="M656.500 452v28M664.500 452v28M672.500 452v28M681.500 452v28M689.500 452v28"/></g>
              <path d="M655 466.500h28M681 462l5 4-5 5" fill="none" stroke="#888"/>
              <!-- doors and windows -->
              <g fill="none" stroke="#55cfe8" stroke-width="1"><path d="M600 393l26-2M600 393q1 23 27 23M639 423.500h23M639 423.500q1 19 23 20M628 484q0-25 25-29M653 455v28M655.500 455v28"/></g>
              <g fill="#7fe0f2"><path d="M623 306h5.500v19.500H623zM623 354h5.500v28.500H623zM623 522h5.500v30H623zM624 606h4.500v22H624zM623 627h5.500v9H623zM729 430h4v11h-4zM981 552h10v5h-10zM598 391h4v5h-4zM637 422h4v4h-4z"/></g>
              <!-- dining -->
              <g fill="#fff" stroke="#909090" stroke-width=".9"><rect x="567" y="426.500" width="14" height="15" rx="3"/><rect x="567" y="490" width="14" height="15" rx="3"/><rect x="545.500" y="448.500" width="15" height="13" rx="3"/><rect x="545.500" y="469.500" width="15" height="13" rx="3"/><rect x="588" y="448.500" width="15" height="13" rx="3"/><rect x="588" y="469.500" width="15" height="13" rx="3"/><path d="M559.500 440.500h30v51h-30z"/><path d="M548.500 449v12M548.500 470v12M600 449v12M600 470v12M568 429.500h12M568 502h12"/></g>
              <!-- living room -->
              <g fill="none" stroke="#8c8c80" stroke-width=".9"><path d="M570.500 550.500 559 541q-5-12 3-17 8-4 14-1l10.500 12z"/><path d="M570.500 547 562 539q-3-9 3-12 6-3 10 0l8 8z"/><path d="M540 559.500q-3 26 0 50h25.500v-49zM548.500 560v49M541 560q-1 25 1 49M548 566.500h13.500v-6M548 603.500h13.500v6M548 584.500h17.500M538 566v39"/><path d="M580.500 569.500h9v21h-9zM611.500 560.500h11.500v38.500h-11.500zM617 565v29"/><path d="M616.500 567l1.500-2 1.500 15-1.500 14-1.500-4z" fill="#999"/><path d="M571 610.500h22q2 0 2 6v6q0 12-13 12t-13-12v-6q0-6 2-6zM573 611v12q0 7 9 7t10-7v-12"/></g>
              <!-- car -->
              <g fill="none" stroke="#7f8c9c" stroke-width=".9">
                <path d="M671 516q5-10 20-10t20 10q7 10 7 30v50q0 28-7 38-5 7-20 7t-20-7q-6-8-6-38v-50q0-20 6-30z"/>
                <path d="M674 517q5-8 17-8t17 8q6 10 6 30v50q0 26-5 34-4 6-18 6t-18-6q-5-8-5-34v-50q0-20 6-30z"/>
                <path d="M668 516q-2 12-1 30M714 516q2 12 1 30M680 512l-5 29M702 512l6 29M669 548q22-17 45 0l-7 16q-15-5-31 0zM674 544q17-12 34 0M676 564l-2 42 7 4h23l5-4-2-42M672 556l4 10v40l-6 10M711 556l-4 10v40l6 10M670 610q3 13 10 15 12 4 22 0 8-3 11-15M680 607q4-3 7 0t-1 4h-6zM696 607q4-3 7 0t-1 4h-6zM673 558q10-8 20-4M688 546l9 2M674 560q5-4 11 0-4 6-11 0M666 575h8M708 575h8M666 552l-2 4M716 552l2 4M671 618l7 17M711 618l-6 17M672 634q18 7 38 0"/>
              </g>
              <!-- second dwelling -->
              <g fill="none" stroke="#a8a89c" stroke-width=".9"><path d="M957.500 278.500h14v15.500h-14zM957.500 345.500h14v16h-14zM957.500 364.500h14v63h-14zM957.500 465.500h14v17h-14zM957.500 534.500h14v17h-14z"/><use href="#bed" x="957" y="298"/><use href="#bed" x="957" y="485"/><path d="M973 386.500h9l5 5v8q-2 6-9 5h-5M974 404.500h9"/><path d="M956 433v10l3 4v-12zM962 433l-1 12 3 2 1-12zM968 433v12l3 1v-12zM974 433v12l3 1v-12zM980 433v12l3 1v-12zM986 433v12l3 1v-12z"/></g>
              <!-- bubbles -->
              <g>
                <use href="#tk" x="506.500" y="202.500"/><use href="#th" x="534.500" y="202.500"/><use href="#th" x="625.500" y="202.500"/><use href="#th" x="728.500" y="202.500"/><use href="#th" x="758.500" y="202.500"/><use href="#tk" x="926.500" y="202.500"/><use href="#th" x="953.500" y="202.500"/>
                <use href="#tk" x="463" y="248.500"/><use href="#tk" x="463" y="274"/><use href="#tk" x="463" y="638"/><use href="#tk" x="882.500" y="248.500"/><use href="#tk" x="882.500" y="274"/><use href="#tk" x="825.500" y="272"/><use href="#tk" x="825.500" y="419"/><use href="#tk" x="825.500" y="450.500"/><use href="#tk" x="825.500" y="481.500"/><use href="#tk" x="825.500" y="526.500"/><use href="#tk" x="825.500" y="639"/><use href="#tk" x="825.500" y="661.500"/><use href="#tk" x="882.500" y="430"/><use href="#tk" x="882.500" y="448"/><use href="#tk" x="882.500" y="554"/><use href="#tk" x="882.500" y="661.500"/>
                <path d="M463 669v6" stroke="#c8506a"/>
                <use href="#bb" x="506.500" y="202.500"/><use href="#bb" x="534.500" y="202.500"/><use href="#bb" x="625.500" y="202.500"/><use href="#bb" x="728.500" y="202.500"/><use href="#bb" x="758.500" y="202.500"/><use href="#bb" x="926.500" y="202.500"/><use href="#bb" x="953.500" y="202.500"/>
                <use href="#bb" x="463" y="248.500"/><use href="#bb" x="463" y="274"/><use href="#bb" x="463" y="638"/><use href="#bb" x="882.500" y="248.500"/><use href="#bb" x="882.500" y="274"/><use href="#bb" x="825.500" y="272"/><use href="#bb" x="825.500" y="419"/><use href="#bb" x="825.500" y="450.500"/><use href="#bb" x="825.500" y="481.500"/><use href="#bb" x="825.500" y="526.500"/><use href="#bb" x="825.500" y="639"/><use href="#bb" x="825.500" y="661.500"/><use href="#bb" x="882.500" y="430"/><use href="#bb" x="882.500" y="448"/><use href="#bb" x="882.500" y="554"/><use href="#bb" x="882.500" y="661.500"/>
              </g>
              <g font-size="8" font-weight="700" fill="#6a1828" text-anchor="middle">
                <text x="506.500" y="205.500">LP</text><text x="534.500" y="205.500">LP</text><text x="625.500" y="205.500">B</text><text x="728.500" y="205.500">C</text><text x="758.500" y="205.500">LP</text><text x="926.500" y="205.500">LP</text><text x="953.500" y="205.500">LP</text>
                <text x="463" y="251.500">LP</text><text x="463" y="277">11</text><text x="463" y="641">2</text><text x="882.500" y="251.500">LP</text><text x="882.500" y="277">11</text><text x="825.500" y="275">LP</text><text x="825.500" y="422">9</text><text x="825.500" y="453.500">6</text><text x="825.500" y="484.500">5</text><text x="825.500" y="529.500">4</text><text x="825.500" y="642">2'</text><text x="825.500" y="664.500">LP</text><text x="882.500" y="433">8</text><text x="882.500" y="451">7</text><text x="882.500" y="557">3</text><text x="882.500" y="664.500">LP</text>
              </g>
              <!-- dimension values -->
              <g font-size="8" fill="#2c301c" stroke="#2c301c" stroke-width=".25" text-anchor="middle">
                <text x="645" y="223.500">7.560</text><text x="532" y="238.500">0.075</text><text x="579" y="238.500">3.045</text><text x="676.500" y="238.500">3.450</text><text x="742.500" y="238.500">0.990</text><text x="951.500" y="238.500">0.075</text><text x="991" y="238.500">3</text>
                <text transform="translate(499 273) rotate(-90)">0.075</text><text transform="translate(483.500 467) rotate(-90)">13.000</text><text transform="translate(499 456) rotate(-90)">12.149</text><text transform="translate(499 650) rotate(-90)">0.778</text>
                <text transform="translate(784 346) rotate(-90)">4.900</text><text transform="translate(784 435) rotate(-90)">1.050</text><text transform="translate(784 466) rotate(-90)">1.050</text><text transform="translate(799 467) rotate(-90)">13.000</text><text transform="translate(784 504) rotate(-90)">1.500</text><text transform="translate(784 583) rotate(-90)">3.750</text><text transform="translate(784 650) rotate(-90)">0.750</text>
                <text transform="translate(918 351) rotate(-90)">5.275</text><text transform="translate(918 439) rotate(-90)">0.600</text><text transform="translate(903 467) rotate(-90)">13.000</text><text transform="translate(918 501) rotate(-90)">3.550</text><text transform="translate(918 608) rotate(-90)">3.575</text>
              </g>
              <!-- room names -->
              <g font-size="9" fill="#4a2028" stroke="#4a2028" stroke-width=".3" text-anchor="middle">
                <text x="580" y="315.500">Cocina</text><text x="690.500" y="329.500">Patio</text><text x="694" y="391">Lavandería</text><text x="678.500" y="441.500">Baño</text><text x="575" y="466">Comedor</text><text x="584.500" y="581">Sala</text><text x="690.500" y="585">Cochera</text><text x="679.500" y="408">L</text><text x="721.500" y="412">B</text><text x="650.500" y="468">S</text>
                <text transform="translate(748 455) rotate(-90)">Pasillo</text>
                <text x="974" y="366" text-anchor="start" font-size="8">Reca</text><text x="984" y="508" text-anchor="start">R</text><text x="982" y="610" text-anchor="start" font-size="8">Te</text><text x="976" y="443" font-size="5">Closet</text>
              </g>
              <!-- crop frame -->
              <path d="M447 675V187H2400" fill="none" stroke="#0a34a4" stroke-width="4.500"/>
              <!-- pan cursor -->
              <g transform="translate(544.500 295.500)">
                <path d="M0-5V5M-5 0H5" stroke="#222" stroke-width="2.600"/>
                <path d="M0-5V5M-5 0H5" stroke="#fff" stroke-width="1"/>
                <path d="M0-8l3 3.500h-6zM0 8l3-3.500h-6zM-8 0l3.500-3v6zM8 0 4.500-3v6z" fill="#fff" stroke="#222" stroke-width=".9"/>
              </g>
            </g>
          </svg>
          <!-- navigation bar -->
          <div class="absolute top-[2px] right-0 flex h-[75px] w-[22px] flex-col items-center rounded-xs border border-[#ccc] bg-[#eee]/80">
            <svg class="h-full w-5" viewBox="0 0 20 73" fill="none" stroke="#999"><circle cx="16" cy="3.500" r="2"/><circle cx="9" cy="18" r="6"/><rect x="5.500" y="14.500" width="7" height="7" rx="2"/><path d="M2 12v10q0 4 4 4h4"/><path d="M11 21h3v2h-3v2h3M15.500 21h1.500l1.500 2-1.500 2h-1.500z" stroke="#4a86b0" stroke-width=".9"/><path d="M8 31h5l-2.500 3zM8 59h5l-2.500 3z" fill="#888" stroke="none"/><path d="M4 46h8v5H4z"/><circle cx="12" cy="50" r="2.500"/><path d="M14 52l3 3"/><circle cx="16" cy="69" r="2"/></svg>
          </div>
          <div class="absolute top-[43px] right-0 h-[4px] w-[22px] bg-[#0a34a4]"></div>
        </div>
        <div class="flex w-3 shrink-0 flex-col items-center justify-between bg-[#e9e9e9] py-[3px]"><svg class="h-[6px] w-2 rotate-180"><use href="#chev"/></svg><span class="h-3 w-1 bg-[#cfcfcf]"></span><svg class="h-[6px] w-2"><use href="#chev"/></svg></div>
      </div>
      <div class="flex h-[14px] shrink-0 items-center bg-white">
        <button class="w-[54px] pl-[4px] text-center">1 : 100</button>
        <div class="flex w-[188px] items-center justify-between">
          <button aria-label="Nivel de detalle"><svg class="size-3" viewBox="0 0 12 12"><path d="M1 2h10v8H1z" fill="#bbb" stroke="#777"/><path d="M1 4h10M1 6h10M1 8h10M3 2v8M5 2v8M7 2v8M9 2v8" stroke="#888" stroke-width=".7"/></svg></button>
          <button aria-label="Estilo visual"><svg class="size-3" viewBox="0 0 12 12"><path d="M1 4l3-3h7v7l-3 3H1z" fill="#58a8dc"/><path d="M1 4l3-3h7L8 4z" fill="#a8d8f4"/></svg></button>
          <button aria-label="Camino de sol"><svg class="size-3" viewBox="0 0 12 12"><circle cx="5" cy="5.500" r="3" fill="#f2b030"/><path d="M5 0v2M0 5.500h2M1.500 2l1.500 1.500M8.500 2 7 3.500M1.500 9 3 7.500" stroke="#e09a20"/><circle cx="9.500" cy="8.500" r="2" fill="#4dbfb0"/></svg></button>
          <button aria-label="Sombras"><svg class="size-3" viewBox="0 0 12 12"><circle cx="5" cy="5" r="3.500" fill="#eee" stroke="#888"/><path d="M1 10h6" stroke="#888" stroke-width="1.500"/><circle cx="9.500" cy="8.500" r="2" fill="#4dbfb0"/></svg></button>
          <button aria-label="Recortar vista"><svg class="size-3" viewBox="0 0 12 12"><path d="M3 11V4h7M0 8h3M6 1v3M1 6h2" fill="none" stroke="#555"/><path d="M7 7l4 4M11 7l-4 4" stroke="#d02030" stroke-width="1.300"/></svg></button>
          <button aria-label="Mostrar región"><svg class="size-3" viewBox="0 0 12 12"><path d="M3 11V4h7M0 8h3M6 1v3M9 4v4" fill="none" stroke="#555"/><circle cx="9.500" cy="8.500" r="2" fill="#4dbfb0"/></svg></button>
          <button aria-label="Ocultar temporal"><svg class="size-3" viewBox="0 0 12 12"><circle cx="3" cy="7.500" r="2" fill="none" stroke="#555"/><circle cx="8" cy="7.500" r="2" fill="none" stroke="#555"/><path d="M3 5l3-2M8 5l3-2" stroke="#555"/></svg></button>
          <button aria-label="Elementos ocultos"><svg class="size-3" viewBox="0 0 12 12"><circle cx="6" cy="4.500" r="3" fill="#4dbfa0"/><path d="M5 8h2v3H5z" fill="#777"/></svg></button>
          <button aria-label="Propiedades temporales"><svg class="size-3" viewBox="0 0 12 12"><path d="M2 8V2h6v2M4 4h4M5.500 5.500h4l1 1v4h-5z" fill="none" stroke="#999"/></svg></button>
          <button aria-label="Modelo analítico"><svg class="size-3" viewBox="0 0 12 12"><path d="M1 11V4l3-3h7v6M1 4h7v7M8 4l3-3M3 11V6M5.500 11V6" fill="none" stroke="#a06050"/><circle cx="9.500" cy="8.500" r="2" fill="#f0b040"/></svg></button>
          <button aria-label="Restricciones"><svg class="size-3" viewBox="0 0 12 12"><path d="M1 2v8M10 2v4M1 4h9M1 7h6" fill="none" stroke="#777"/><circle cx="9.500" cy="8.500" r="2" fill="#4dbfb0"/></svg></button>
        </div>
        <div class="flex h-full min-w-0 flex-1 items-center justify-between bg-[#e9e9e9] pr-px"><svg class="h-[6px] w-2 rotate-90"><use href="#chev"/></svg><span class="h-1 w-3 rounded-xs bg-[#cacaca]"></span><svg class="h-[6px] w-2 -rotate-90"><use href="#chev"/></svg></div>
        <svg class="h-full w-3 bg-[#e9e9e9]" viewBox="0 0 12 14"><path d="M9 6h2v2H9zM5 10h2v2H5zM9 10h2v2H9z" fill="#888"/></svg>
      </div>
    </section>

    <!-- Project browser -->
    <aside class="flex w-[277px] shrink-0 flex-col border-l-2 border-[#b4b4b4]">
      <div class="flex h-[14px] shrink-0 items-center justify-between bg-[#d6d6d6] pl-[2px]"><h2>Navegador de proyectos - Proyecto1</h2><button aria-label="Cerrar navegador" class="size-[9px]"><svg class="size-[9px]" viewBox="0 0 9 9"><path d="M2 2l5 5M7 2 2 7" stroke="#444"/></svg></button></div>
      <label class="mt-[5px] mr-[5px] ml-[7px] flex h-4 shrink-0 items-center gap-[4px] border border-[#e4e4e4] pl-[5px]"><svg class="size-3" viewBox="0 0 12 12"><circle cx="5" cy="5" r="3.700" fill="none" stroke="#666"/><path d="M8 8l3 3" stroke="#666" stroke-width="1.200"/></svg><input type="search" aria-label="Buscar" placeholder="Buscar" class="min-w-0 flex-1 outline-none placeholder:text-[#aaa]"></label>
      <ul class="mt-[6px] grid h-[147px] shrink-0 auto-rows-fr text-[#555] whitespace-nowrap">
        <li class="flex items-center gap-px pl-[4px]"><svg class="size-2" viewBox="0 0 8 8"><path d="M1.500 4h5" stroke="#555"/></svg><svg class="ml-[3px] size-3" viewBox="0 0 12 12"><path d="M1 3V1h2M9 1h2v2M11 9v2H9M3 11H1V9M3 4.500 4.500 3H9v4.500L7.500 9H3zM3 4.500h4.500V9M7.500 4.500 9 3" fill="none" stroke="#666" stroke-width=".9"/></svg>Vistas (todo)</li>
        <li class="ml-[7px] flex items-center gap-1 border-l border-dotted border-[#bbb] pl-[6px]"><svg class="size-2"><use href="#plus"/></svg>Planos de planta</li>
        <li class="ml-[7px] flex items-center gap-1 border-l border-dotted border-[#bbb] pl-[6px]"><svg class="size-2"><use href="#plus"/></svg>Planos de techo</li>
        <li class="ml-[7px] flex items-center gap-1 border-l border-dotted border-[#bbb] pl-[6px]"><svg class="size-2"><use href="#plus"/></svg>Vistas 3D</li>
        <li class="ml-[7px] flex items-center gap-1 border-l border-dotted border-[#bbb] pl-[6px]"><svg class="size-2"><use href="#plus"/></svg>Alzados (Alzado 1)</li>
        <li class="flex items-center gap-px pl-4"><svg class="size-3" viewBox="0 0 12 12"><path d="M1 1h10v10H1z" fill="#ddd" stroke="#666"/><path d="M1 1h10v2.500H1z" fill="#666"/><path d="M2.500 5h3v2h-3zM7 5h3M7 7h3M2.500 9h3M7 9h3" stroke="#777" fill="none" stroke-width=".8"/></svg>Leyendas</li>
        <li class="flex items-center gap-px border-y border-[#eaeaea] bg-[#f4f4f4] pl-[4px]"><svg class="size-2"><use href="#plus"/></svg><svg class="ml-[3px] size-3" viewBox="0 0 12 12"><path d="M1 2.500h10v7.500H1zM4.500 3v7M7.500 3v7M1 6h10M1 8h10" fill="#e8e8e8" stroke="#666" stroke-width=".9"/><path d="M1 2h10v2H1z" fill="#555"/></svg>Tablas de planificación/Cantidades (todo)</li>
        <li class="flex items-center gap-px pl-4"><svg class="size-3" viewBox="0 0 12 12"><path d="M1 3l5-2 4 4v5H2l2-3H1zM6 6l5 3-1 2H4" fill="none" stroke="#666" stroke-width=".9"/></svg>Planos (todo)</li>
        <li class="flex items-center gap-px pl-[4px]"><svg class="size-2"><use href="#plus"/></svg><svg class="ml-[3px] size-3" viewBox="0 0 12 12"><path d="M1 1h10v10H1zM3 1v5h3V1M1 8h6v3M8.500 1v7H11" fill="none" stroke="#777" stroke-width=".9"/></svg>Familias</li>
        <li class="flex items-center gap-px pl-[4px]"><svg class="size-2"><use href="#plus"/></svg><svg class="ml-[3px] size-3" viewBox="0 0 12 12"><path d="M3 1H1v10h2M9 1h2v10H9" fill="none" stroke="#666"/><circle cx="5" cy="5" r="2.300" fill="none" stroke="#666" stroke-width=".8"/><path d="M5 5.500h4V9H5z" fill="#ddd" stroke="#666" stroke-width=".8"/></svg>Grupos</li>
        <li class="flex items-center gap-px pl-4"><svg class="size-3" viewBox="0 0 12 12"><g fill="none" stroke="#e09050"><rect x="-3" y="-2" width="6" height="4" rx="2" transform="translate(4 7.500) rotate(-35)"/><rect x="-3" y="-2" width="6" height="4" rx="2" transform="translate(8 4.500) rotate(-35)"/></g></svg>Vínculos de Revit</li>
      </ul>
    </aside>
  </main>

  <!-- Status bar -->
  <footer class="flex h-4 shrink-0 items-center border-t border-[#e4e4e4] bg-[#f4f4f4] pl-[2px] whitespace-nowrap">
    <p class="w-[634px]">Mantenga pulsado el botón y mueva el ratón para desplazar la vista. Mantenga pulsada la tecla Ctrl para ampliar. Mantenga pulsada la tecla Mayús para girar.</p>
    <svg class="size-3" viewBox="0 0 12 12"><path d="M1 2l4-1v6l-4 1z" fill="#3f8fd0"/><path d="M4 4h5v6H4z" fill="#4dbf80"/><path d="M7 3l4 1v5l-3 2" fill="none" stroke="#d07040"/></svg>
    <svg class="ml-[132px] h-[6px] w-2 opacity-60"><use href="#chev"/></svg>
    <button class="ml-[5px] flex items-center text-[#888]"><svg class="size-3" viewBox="0 0 10 10"><circle cx="3.500" cy="4" r="1.800" fill="none" stroke="#888"/><path d="M.5 9q0-2.500 3-2.500T6.500 9zM6 1h3v3H7" fill="none" stroke="#888"/></svg>:0</button>
    <button aria-label="Opciones de diseño" class="ml-[14px]"><svg class="size-3" viewBox="0 0 12 12"><path d="M1 1.500h10v9H1zM1 4h10M1 6h10M1 8h10M3.500 2v8" fill="#fff" stroke="#555" stroke-width=".9"/></svg></button>
    <button aria-label="Opción activa" class="ml-[5px]"><svg class="size-3" viewBox="0 0 12 12"><path d="M3 1.500h8v8H6zM3 1.500v6M3 4h8M5.500 2v8M1 8h4M3 6v5" fill="none" stroke="#888" stroke-width=".9"/></svg></button>
    <select aria-label="Opción de diseño" class="ml-[3px] h-[14px] w-[126px] appearance-none bg-transparent text-[#a8a8a8]"><option>Modelo base</option></select>
    <svg class="h-[6px] w-2 opacity-60"><use href="#chev"/></svg>
    <div class="mr-[29px] ml-auto flex items-center gap-1">
      <button aria-label="Seleccionar vínculos"><svg class="size-3" viewBox="0 0 12 12"><use href="#link" x="0" y="1" width="10" height="5"/><use href="#cur" x="5" y="3" width="6" height="8"/></svg></button>
      <button aria-label="Seleccionar subyacentes"><svg class="size-3" viewBox="0 0 12 12"><path d="M0 8l4-5h3v5z" fill="#4a9ad0"/><path d="M7 1l4 4M11 1 7 5" stroke="#d02030" stroke-width="1.200"/><use href="#cur" x="5" y="4" width="6" height="8"/></svg></button>
      <button aria-label="Seleccionar bloqueados"><svg class="size-3" viewBox="0 0 12 12"><path d="M1 1h6v2L5 5v3H3V5L1 3z" fill="#ddd" stroke="#888" stroke-width=".8"/><use href="#cur" x="5" y="4" width="6" height="8"/></svg></button>
      <button aria-label="Seleccionar por cara"><svg class="size-3" viewBox="0 0 12 12"><path d="M1 3l3-2v8l-3 2zM4 2h4v7H4z" fill="#4a9ad0"/><path d="M7 1l4 4M11 1 7 5" stroke="#d02030" stroke-width="1.200"/><use href="#cur" x="5" y="4" width="6" height="8"/></svg></button>
      <button aria-label="Arrastrar"><svg class="size-3" viewBox="0 0 12 12"><path d="M4.500 1v8M.5 5h8M3 2.500 4.500 1 6 2.500M2 3.500.5 5 2 6.500" fill="none" stroke="#444"/><use href="#cur" x="6" y="4" width="6" height="8"/></svg></button>
      <button aria-label="Procesos"><svg class="size-3" viewBox="0 0 12 12"><circle cx="6" cy="6" r="4" fill="none" stroke="#999" stroke-width="1.500" stroke-dasharray="1.500 1.600"/></svg></button>
      <button aria-label="Filtro" class="-ml-px flex items-center"><svg class="size-3" viewBox="0 0 12 12"><path d="M1 1.500h10L7.500 6v5l-3-1.500V6z" fill="#bbb" stroke="#777" stroke-width=".9"/></svg>:0</button>
    </div>
  </footer>
  <div class="h-[4px] shrink-0 bg-linear-to-r from-[#17141a] via-[#1c1822] to-[#2c0c44]"></div>
  <div class="h-[14px] shrink-0 bg-black"></div>
</div>
</body>
</html>
